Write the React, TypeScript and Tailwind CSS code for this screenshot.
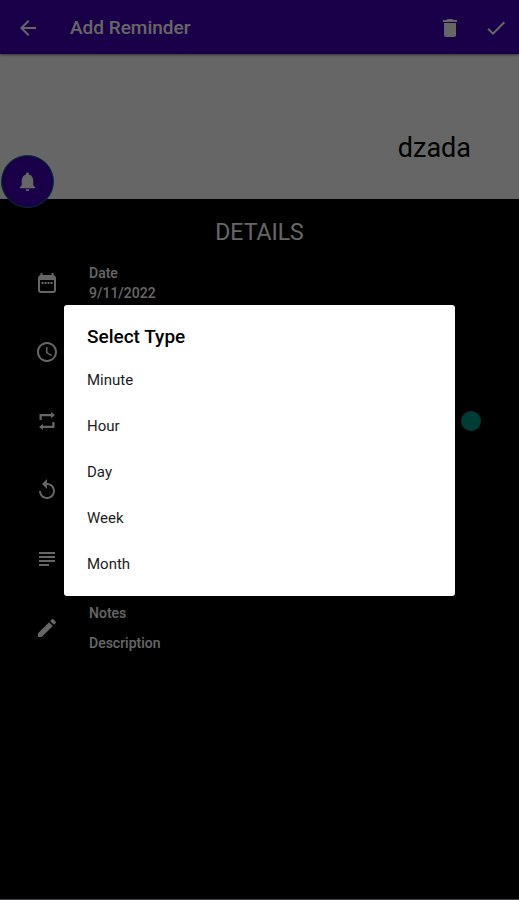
import { useState } from 'react'
import type { ReactNode } from 'react'
import {
  MdAccessTime,
  MdArrowBack,
  MdCheck,
  MdDelete,
  MdEdit,
  MdNotifications,
  MdReplay,
  MdSubject,
} from 'react-icons/md'

const types = ['Minute', 'Hour', 'Day', 'Week', 'Month']

function CalendarIcon() {
  return (
    <svg viewBox="0 0 24 24" className="size-6" fill="currentColor" aria-hidden="true">
      <path
        fillRule="evenodd"
        d="M5.5 2h2v2h9V2h2v2.1A3 3 0 0 1 21 7v12a3 3 0 0 1-3 3H6a3 3 0 0 1-3-3V7a3 3 0 0 1 2.5-2.9V2zM5 9v10a1 1 0 0 0 1 1h12a1 1 0 0 0 1-1V9H5z"
      />
      <path d="M6.5 11h2v2h-2zM9.5 11h2v2h-2zM12.5 11h2v2h-2zM15.5 11h2v2h-2z" />
    </svg>
  )
}

function RepeatIcon() {
  return (
    <svg viewBox="0 0 24 24" className="size-6" fill="currentColor" aria-hidden="true">
      <path d="M4.5 11V5h11.5V3l4 3-4 3.2V7.2H6.7V11zM19.5 13v6H8v2l-4-3 4-3.2v2h9.3V13z" />
    </svg>
  )
}

type DetailRowProps = {
  icon: ReactNode
  children?: ReactNode
}

function DetailRow({ icon, children }: DetailRowProps) {
  return (
    <li className="flex h-[69px] items-center gap-[30px] pr-[38px] pl-[35px]">
      <span className="flex size-6 shrink-0 items-center justify-center">{icon}</span>
      {children}
    </li>
  )
}

function TypeDialog({ onSelect }: { onSelect: (type: string) => void }) {
  return (
    <div className="fixed inset-0 z-20 flex items-center bg-black/60 px-16">
      <div
        role="dialog"
        aria-modal="true"
        aria-labelledby="type-title"
        className="w-full rounded-[3px] bg-white pt-5 pb-2"
      >
        <h2 id="type-title" className="px-[23px] pb-[9px] text-[19px] leading-6 font-medium text-black">
          Select Type
        </h2>
        {types.map((type) => (
          <button
            key={type}
            type="button"
            onClick={() => onSelect(type)}
            className="flex h-[46px] w-full items-center px-[23px] text-[15px] text-[#1c1c1c]"
          >
            {type}
          </button>
        ))}
      </div>
    </div>
  )
}

export default function App() {
  const [title, setTitle] = useState('dzada')
  const [open, setOpen] = useState(true)

  return (
    <div className="relative flex min-h-screen flex-col border-b border-[#b5a8b2] bg-black font-['Roboto',sans-serif] text-white">
      <header className="relative z-10 flex h-[54px] items-center bg-[#3f00b3] pt-px pr-[11px] pl-4 shadow-sm shadow-black/40">
        <button type="button" aria-label="Back">
          <MdArrowBack className="size-6" />
        </button>
        <h1 className="ml-[30px] flex-1 pt-px text-[19px] leading-6 font-medium">Add Reminder</h1>
        <button type="button" aria-label="Delete">
          <MdDelete className="size-6" />
        </button>
        <button type="button" aria-label="Save" className="ml-[22px]">
          <MdCheck className="size-6" />
        </button>
      </header>

      <section className="relative flex h-[145px] items-center bg-white px-12 pt-[42px]">
        <input
          aria-label="Reminder title"
          value={title}
          onChange={(e) => setTitle(e.target.value)}
          className="w-full bg-transparent text-right text-[27px] leading-8 text-black outline-none"
        />
        {/* Floating button sits over the lower edge of the banner */}
        <button
          type="button"
          aria-label="Notification"
          className="absolute -bottom-[9px] left-px flex size-[53px] items-center justify-center rounded-full border border-[#03807c] bg-[#3f00b3]"
        >
          <MdNotifications className="size-[23px]" />
        </button>
      </section>

      <main>
        <h2 className="pt-5 pb-px text-center text-[23px] leading-7">DETAILS</h2>
        <ul>
          <DetailRow icon={<CalendarIcon />}>
            <div className="text-[14px] leading-5 font-medium">
              <p>Date</p>
              <p>9/11/2022</p>
            </div>
          </DetailRow>
          <DetailRow icon={<MdAccessTime className="size-6" />} />
          <DetailRow icon={<RepeatIcon />}>
            <input
              type="checkbox"
              role="switch"
              aria-label="Repeat"
              defaultChecked
              className="ml-auto size-5 appearance-none rounded-full bg-[#009688]"
            />
          </DetailRow>
          <DetailRow icon={<MdReplay className="size-6" />} />
          <DetailRow icon={<MdSubject className="size-6" />} />
          <DetailRow icon={<MdEdit className="size-6" />}>
            <div className="flex flex-col gap-[10px] text-[14px] leading-5 font-medium">
              <p>Notes</p>
              <p>Description</p>
            </div>
          </DetailRow>
        </ul>
      </main>

      {open && <TypeDialog onSelect={() => setOpen(false)} />}
    </div>
  )
}
